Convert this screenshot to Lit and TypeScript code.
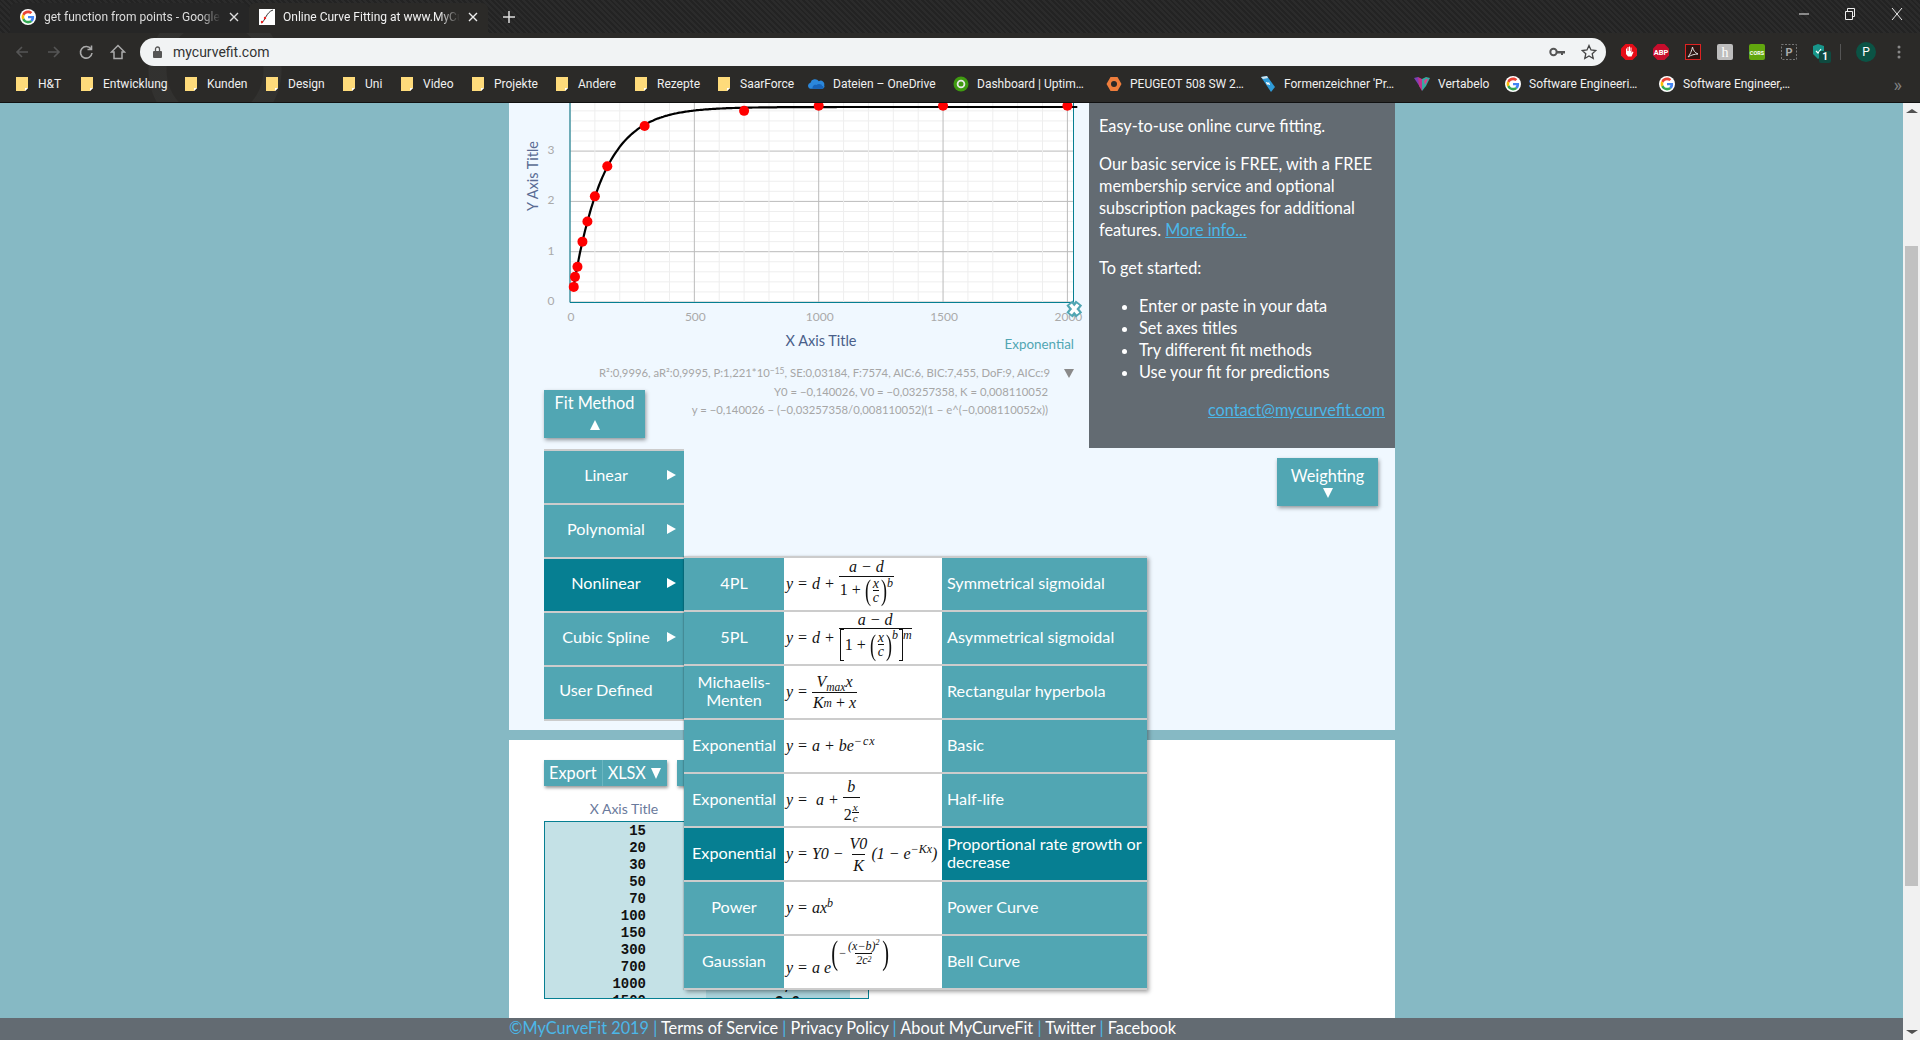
import { LitElement, css, html, svg } from 'lit';
import { customElement } from 'lit/decorators.js';

const UI_FONT = css`Lato, 'Open Sans', sans-serif`;

const X_VALUES = [15, 20, 30, 50, 70, 100, 150, 300, 700, 1000, 1500];
const POINTS: [number, number][] = [
  [15, 0.3], [20, 0.5], [30, 0.7], [50, 1.2], [70, 1.6], [100, 2.1],
  [150, 2.7], [300, 3.5], [700, 3.8], [1000, 3.9], [1500, 3.9], [2000, 3.9],
];

// chart coordinates are page pixels, the svg viewBox starts where the card does
const px = (x: number): number => 570 + x * 0.2487;
const py = (y: number): number => 302 - y * 50.3;
const fit = (x: number): number => -0.140026 + (0.03257358 / 0.008110052) * (1 - Math.exp(-0.008110052 * x));

const googleIcon = (size = 16) => html`
  <svg width=${size} height=${size} viewBox="-6 -6 60 60" class="fav">
    <circle cx="24" cy="24" r="30" fill="#fff"></circle>
    <path fill="#EA4335" d="M24 9.5c3.54 0 6.71 1.22 9.21 3.6l6.85-6.85C35.9 2.38 30.47 0 24 0 14.62 0 6.51 5.38 2.56 13.22l7.98 6.19C12.43 13.72 17.74 9.5 24 9.5z"></path>
    <path fill="#4285F4" d="M46.98 24.55c0-1.57-.15-3.09-.38-4.55H24v9.02h12.94c-.58 2.96-2.26 5.48-4.78 7.18l7.73 6c4.51-4.18 7.09-10.36 7.09-17.65z"></path>
    <path fill="#FBBC05" d="M10.53 28.59c-.48-1.45-.76-2.99-.76-4.59s.27-3.14.76-4.59l-7.98-6.19C.92 16.46 0 20.12 0 24c0 3.88.92 7.54 2.56 10.78l7.97-6.19z"></path>
    <path fill="#34A853" d="M24 48c6.48 0 11.93-2.13 16.09-5.81l-7.73-6c-2.15 1.45-4.92 2.3-8.36 2.3-6.26 0-11.57-4.22-13.47-9.91l-7.98 6.19C6.51 42.62 14.62 48 24 48z"></path>
  </svg>`;

const curveIcon = html`
  <svg width="16" height="16" viewBox="0 0 16 16" class="fav">
    <rect width="16" height="16" fill="#fff"></rect>
    <path d="M2 14C6 13 7 3 14 1" fill="none" stroke="#333" stroke-width="1"></path>
    <circle cx="3" cy="13" r="1.2" fill="#e22"></circle>
    <circle cx="6" cy="9" r="1.2" fill="#e22"></circle>
  </svg>`;

const folderIcon = html`
  <svg width="13" height="16" viewBox="0 0 13 16" class="fav folder">
    <path d="M0 1h12v11l-3 3H0z" fill="#fedb7b"></path>
    <path d="M9 15v-3h3z" fill="#fff"></path>
  </svg>`;

const oneDriveIcon = html`
  <svg width="17" height="16" viewBox="0 0 18 16" class="fav">
    <path d="M2 13a3.4 3.4 0 0 1 .6-6.4A5 5 0 0 1 11.5 5a3.8 3.8 0 0 1 5.6 4.4A2.4 2.4 0 0 1 15 13z" fill="#2b87db"></path>
    <path d="M5 13c-1-3 2-5 4-4 2-2 6-1 6 1 2 0 2 3 0 3z" fill="#1763b8"></path>
  </svg>`;

const uptimeIcon = html`
  <svg width="16" height="16" viewBox="0 0 16 16" class="fav">
    <circle cx="8" cy="8" r="7.5" fill="#3f9a10"></circle>
    <circle cx="8" cy="8" r="3.4" fill="none" stroke="#e8e8e8" stroke-width="1.8"></circle>
  </svg>`;

const peugeotIcon = html`
  <svg width="16" height="16" viewBox="0 0 16 16" class="fav">
    <path d="M4.5 1h7L15.5 8l-4 7h-7L.5 8z" fill="#ee7d3c"></path>
    <circle cx="8" cy="8" r="3" fill="#2a2928"></circle>
  </svg>`;

const formIcon = html`
  <svg width="16" height="16" viewBox="0 0 16 16" class="fav">
    <path d="M1 1l6-1 8 11-4 5z" fill="#2f9bd8"></path>
    <path d="M1 1l6-1 1 2-5 1z" fill="#cfe3ee"></path>
    <path d="M6 6h1l1 1 1-1 1 3-1 0-1-1-1 1z" fill="#fff"></path>
  </svg>`;

const vertabeloIcon = html`
  <svg width="16" height="16" viewBox="0 0 16 16" class="fav">
    <path d="M0 2l4-1 4 6-2 4z" fill="#7b3fb5"></path>
    <path d="M4 1l4 2 2 4-2 8-3-5z" fill="#c0338f"></path>
    <path d="M8 3l4-2 4 1-4 8-4 5z" fill="#38a8a0"></path>
    <path d="M10 5l2-2 2 0-3 6z" fill="#e0408a"></path>
  </svg>`;

const BOOKMARKS = [
  { label: 'H&T', icon: folderIcon, width: 65 },
  { label: 'Entwicklung', icon: folderIcon, width: 104 },
  { label: 'Kunden', icon: folderIcon, width: 81 },
  { label: 'Design', icon: folderIcon, width: 77 },
  { label: 'Uni', icon: folderIcon, width: 58 },
  { label: 'Video', icon: folderIcon, width: 71 },
  { label: 'Projekte', icon: folderIcon, width: 84 },
  { label: 'Andere', icon: folderIcon, width: 79 },
  { label: 'Rezepte', icon: folderIcon, width: 83 },
  { label: 'SaarForce', icon: folderIcon, width: 90 },
  { label: 'Dateien – OneDrive', icon: oneDriveIcon, width: 145 },
  { label: 'Dashboard | Uptim…', icon: uptimeIcon, width: 153 },
  { label: 'PEUGEOT 508 SW 2…', icon: peugeotIcon, width: 154 },
  { label: "Formenzeichner 'Pr…", icon: formIcon, width: 154 },
  { label: 'Vertabelo', icon: vertabeloIcon, width: 91 },
  { label: 'Software Engineeri…', icon: googleIcon(), width: 154 },
  { label: 'Software Engineer,…', icon: googleIcon(), width: 154 },
];

const FIT_TYPES = [
  { label: 'Linear', arrow: true },
  { label: 'Polynomial', arrow: true },
  { label: 'Nonlinear', arrow: true, active: true },
  { label: 'Cubic Spline', arrow: true },
  { label: 'User Defined', arrow: false },
];

const frac = (num: unknown, den: unknown, cls = '') =>
  html`<span class="frac ${cls}"><span class="num">${num}</span><span class="den">${den}</span></span>`;

const xOverC = html`<span class="paren">(</span>${frac('x', 'c', 'inner')}<span class="paren">)</span>`;

const NONLINEAR = [
  {
    name: '4PL',
    desc: 'Symmetrical sigmoidal',
    eq: html`<span>y = d +&nbsp;</span>${frac(
      'a − d',
      html`<span class="up">1 +&nbsp;</span>${xOverC}<span class="raise">b</span>`,
      'f4',
    )}`,
  },
  {
    name: '5PL',
    desc: 'Asymmetrical sigmoidal',
    eq: html`<span>y = d +&nbsp;</span>${frac(
      'a − d',
      html`<span class="brk l"></span><span class="up">1 +&nbsp;</span>${xOverC}<span class="raise">b</span><span class="brk r"></span><span class="raise">m</span>`,
      'f5',
    )}`,
  },
  {
    name: 'Michaelis-Menten',
    desc: 'Rectangular hyperbola',
    eq: html`<span>y =&nbsp;</span>${frac(
      html`V<sub>max</sub>x`,
      html`K<sub>m</sub><span class="up">&nbsp;+&nbsp;</span>x`,
      'mm',
    )}`,
  },
  { name: 'Exponential', desc: 'Basic', eq: html`<span>y = a + be<sup class="sp">−cx</sup></span>` },
  {
    name: 'Exponential',
    desc: 'Half-life',
    eq: html`<span>y = &nbsp;a +&nbsp;</span>${frac(
      'b',
      html`<span class="up">2</span>${frac('x', 'c', 'tiny')}`,
      'half',
    )}`,
  },
  {
    name: 'Exponential',
    desc: 'Proportional rate growth or decrease',
    active: true,
    eq: html`<span>y = Y0 −&nbsp;</span>${frac('V0', 'K', 'vk')}<span class="kx">(1 − e<sup>−Kx</sup>)</span>`,
  },
  { name: 'Power', desc: 'Power Curve', eq: html`<span>y = ax<sup class="sp">b</sup></span>` },
  {
    name: 'Gaussian',
    desc: 'Bell Curve',
    eq: html`<span class="gauss-base">y = a e</span><span class="gauss-exp"><span class="paren tall">(</span><span class="minus">−</span>${frac(
      html`(x−b)<sup class="tiny-sup">2</sup>`,
      html`2c<sup class="tiny-sup">2</sup>`,
      'small',
    )}<span class="paren tall">)</span></span>`,
  },
];

@customElement('app-root')
export class AppRoot extends LitElement {
  static styles = css`
    :host {
      display: flex;
      flex-direction: column;
      width: 1920px;
      height: 1040px;
      overflow: hidden;
      font-family: ${UI_FONT};
    }

    .fav { flex: none; display: block; }
    .fav.folder { margin-right: 1px; }

    /* browser chrome */
    .tabstrip {
      height: 33px;
      box-sizing: border-box;
      padding: 3px 0 0 10px;
      display: flex;
      align-items: flex-start;
      background:
        radial-gradient(circle at 215px 70px, transparent 48px, rgba(255, 255, 255, 0.035) 49px 66px, transparent 67px),
        repeating-linear-gradient(45deg, #2b2b2b 0 2px, #232323 2px 4px);
      color: #ddd;
      font: 12px Roboto, sans-serif;
    }
    .tab {
      width: 239px;
      height: 30px;
      display: flex;
      align-items: center;
      gap: 8px;
      padding: 0 10px 2px;
      box-sizing: border-box;
      background: #262626;
      border-radius: 6px 6px 0 0;
    }
    .tab.current { background: #2b2a28; color: #f2f2f2; }
    .tab-label {
      flex: 1;
      white-space: nowrap;
      overflow: hidden;
      mask-image: linear-gradient(to right, #000 88%, transparent);
    }
    .new-tab { margin: 8px 0 0 15px; }
    .window-controls {
      margin-left: auto;
      display: flex;
      align-items: center;
      gap: 36px;
      padding: 5px 17px 0 0;
    }

    .toolbar {
      height: 33px;
      display: flex;
      align-items: center;
      background:
        radial-gradient(circle at 215px 37px, transparent 48px, rgba(255, 255, 255, 0.035) 49px 66px, transparent 67px),
        #2b2a28;
    }
    .nav { display: flex; gap: 16px; padding: 0 0 0 14px; width: 140px; box-sizing: border-box; margin-top: 4px; }
    .omnibox {
      width: 1466px;
      height: 28px;
      margin-top: 4px;
      display: flex;
      align-items: center;
      gap: 11px;
      padding: 0 9px 0 13px;
      box-sizing: border-box;
      background: #f1f3f4;
      border-radius: 14px;
      color: #333;
      font: 14px Roboto, sans-serif;
    }
    .omni-url { flex: 1; }
    .star { margin-left: 5px; }
    .extensions {
      display: flex;
      align-items: center;
      gap: 14px;
      margin: 4px 0 0 14px;
    }
    .ext { width: 18px; height: 18px; flex: none; }
    .divider { width: 1px; height: 16px; background: #555; margin-left: -4px; }
    .shield { position: relative; }
    .badge {
      position: absolute;
      left: 7px;
      top: 8px;
      width: 12px;
      height: 12px;
      background: #0f4a40;
      color: #fff;
      font: bold 10px/12px Roboto, sans-serif;
      text-align: center;
      border-radius: 2px;
    }
    .avatar {
      width: 20px;
      height: 20px;
      margin-left: 1px;
      border-radius: 50%;
      background: #0b5345;
      color: #fff;
      font: 12px/20px Roboto, sans-serif;
      text-align: center;
    }
    .dots { margin-left: 7px; }

    .bookmarks {
      height: 36px;
      display: flex;
      align-items: center;
      padding-left: 16px;
      background:
        radial-gradient(circle at 215px 4px, transparent 48px, rgba(255, 255, 255, 0.035) 49px 66px, transparent 67px),
        #2b2a28;
      border-bottom: 1px solid #111;
      color: #f0f0f0;
      font: 12px Roboto, sans-serif;
      position: relative;
    }
    .bookmark { display: flex; align-items: center; gap: 8px; white-space: nowrap; flex: none; }
    .chevrons { position: absolute; right: 18px; color: #808080; font-size: 18px; }

    /* page */
    .window { flex: 1; min-height: 0; display: flex; }
    .viewport { flex: 1; min-width: 0; display: flex; flex-direction: column; background: #86b9c4; }
    .content { flex: 1; min-height: 0; display: flex; flex-direction: column; gap: 10px; margin-left: 509px; width: 886px; }
    .footer {
      height: 22px;
      padding-left: 509px;
      background: #636b72;
      color: #fff;
      font-size: 16.3px;
      line-height: 20px;
      white-space: nowrap;
    }
    .footer a, .footer i { color: #4bb7e8; font-style: normal; }
    .footer a.plain { color: #fff; }

    .scrollbar {
      width: 17px;
      display: flex;
      flex-direction: column;
      align-items: center;
      background: #f1f1f1;
      padding: 6px 0;
      box-sizing: border-box;
    }
    .sb-up { border: 4px solid transparent; border-top: 0; border-bottom: 4px solid #505050; border-left-width: 6px; border-right-width: 6px; }
    .sb-down { border: 4px solid transparent; border-bottom: 0; border-top: 4px solid #505050; border-left-width: 6px; border-right-width: 6px; margin-top: auto; }
    .sb-thumb { width: 13px; height: 640px; margin-top: 133px; background: #c1c1c1; }

    .card-top {
      height: 627px;
      position: relative;
      z-index: 2;
      display: grid;
      grid-template-columns: 580px 306px;
      background: #f0f8ff;
    }
    .chart-col { display: flex; flex-direction: column; }
    .chart { display: block; width: 580px; height: 258px; font-family: ${UI_FONT}; }

    .fit-row { display: grid; padding-left: 35px; margin-top: 3px; height: 74px; }
    .fit-row > * { grid-area: 1 / 1; }
    .stats {
      justify-self: end;
      align-self: start;
      color: #a6a6a6;
      font-size: 11.3px;
      line-height: 18.5px;
      text-align: right;
      white-space: nowrap;
      padding-right: 41px;
    }
    .stats sup { font-size: 8.5px; line-height: 0; vertical-align: 3px; }
    .stats-first { margin-right: -26px; display: flex; align-items: center; justify-content: flex-end; }
    .stats-arrow {
      margin-left: 14px;
      border-left: 5px solid transparent;
      border-right: 5px solid transparent;
      border-top: 9px solid #8a8a8a;
    }

    .btn {
      width: 101px;
      height: 48px;
      box-sizing: border-box;
      display: flex;
      flex-direction: column;
      align-items: center;
      background: #51a6b3;
      color: #fff;
      font-size: 16.3px;
      line-height: 20px;
      box-shadow: 1px 2px 4px rgba(0, 0, 0, 0.4);
    }
    .btn-fit { justify-self: start; align-self: end; padding-top: 3px; }
    .tri-up { border-left: 5px solid transparent; border-right: 5px solid transparent; border-bottom: 10px solid #fff; margin-top: 7px; }
    .tri-down { border-left: 5px solid transparent; border-right: 5px solid transparent; border-top: 10px solid #fff; margin-top: 2px; }

    .side-col { display: flex; flex-direction: column; }
    .sidebar {
      height: 345px;
      padding: 12px 10px 0 10px;
      box-sizing: border-box;
      background: #636b72;
      color: #fff;
      font-size: 16.3px;
      line-height: 22px;
    }
    .sidebar p { margin: 0 0 16px; }
    .sidebar ul { margin: 0 0 16px; padding-left: 40px; }
    .sidebar a { color: #4bb7e8; text-decoration: underline; }
    .contact { text-align: right; }
    .btn-weight { margin: 10px 0 0 188px; padding-top: 8px; }

    /* fit method menu, lies over both cards */
    .menu { position: absolute; left: 35px; top: 346px; width: 140px; font-size: 16.2px; color: #fff; }
    .menu-row {
      height: 54px;
      box-sizing: border-box;
      display: flex;
      align-items: center;
      padding-bottom: 5px;
      background: #51a6b3;
      border-top: 2px solid #ccc;
    }
    .menu-row.last { height: 56px; padding-bottom: 7px; border-bottom: 2px solid #ccc; }
    .menu-row.active { background: #067f92; }
    .menu-row .menu-label { width: 124px; text-align: center; }
    .menu-arrow { border-top: 5px solid transparent; border-bottom: 5px solid transparent; border-left: 9px solid #fff; margin-left: -1px; }
    .submenu {
      position: absolute;
      left: 140px;
      top: 107px;
      width: 463px;
      border-bottom: 2px solid #ccc;
      box-shadow: 2px 2px 4px rgba(0, 0, 0, 0.35), -1px 0 1px rgba(0, 0, 0, 0.12);
    }
    .sub-row { height: 54px; box-sizing: border-box; display: grid; grid-template-columns: 100px 158px 205px; border-top: 2px solid #ccc; }
    .sub-name, .sub-desc { background: #51a6b3; display: flex; align-items: center; line-height: 18px; padding-bottom: 3px; }
    .sub-name { justify-content: center; text-align: center; padding-left: 3px; padding-right: 3px; }
    .sub-desc { padding-left: 5px; padding-right: 3px; }
    .sub-row.active .sub-name, .sub-row.active .sub-desc { background: #067f92; }

    /* formulas */
    .eq {
      background: #fff;
      color: #111;
      font: italic 16px 'Liberation Serif', serif;
      display: flex;
      align-items: center;
      padding-left: 2px;
      white-space: nowrap;
      overflow: hidden;
    }
    .frac { display: inline-flex; flex-direction: column; align-items: center; }
    .frac > .num { padding: 0 2px; line-height: 16px; }
    .frac > .den { display: flex; align-items: center; justify-content: center; border-top: 1px solid #111; line-height: 16px; padding: 0 1px; }
    .up { font-style: normal; }
    .paren { font-style: normal; font-size: 30px; line-height: 24px; font-weight: normal; transform: scaleX(0.6); margin: 0 -2px; }
    .inner > .num, .inner > .den { font-size: 14px; line-height: 13px; }
    .inner > .den { padding: 0; }
    .eq sub { font-size: 11.5px; line-height: 0; }
    .eq sup { font-size: 12px; line-height: 0; }
    .raise { align-self: flex-start; font-size: 12px; line-height: 12px; }
    .sp { letter-spacing: 1px; }
    .kx { margin-left: 2px; }
    .f4 { margin-bottom: 7px; }
    .f4 > .num { line-height: 18px; }
    .f5 { margin-bottom: 4px; }
    .f5 > .den { padding-right: 0; }
    .brk { width: 3px; height: 30px; border: solid #111; border-width: 1px 0; flex: none; }
    .brk.l { border-left-width: 1px; margin-right: 1px; }
    .brk.r { border-right-width: 1px; margin-left: 1px; }
    .mm > .num, .mm > .den { line-height: 20px; }
    .half > .num { line-height: 20px; }
    .half > .den { height: 25px; align-items: flex-end; }
    .tiny > .num, .tiny > .den { font-size: 11px; line-height: 10px; padding: 0 1px; }
    .vk > .num, .vk > .den { line-height: 21px; }
    .gauss-base { align-self: flex-end; margin-bottom: 11px; }
    .gauss-exp { display: flex; align-items: center; align-self: flex-start; margin-top: 3px; font-size: 12px; }
    .paren.tall { font-size: 34px; line-height: 28px; }
    .minus { font-style: normal; margin-left: 1px; }
    .small > .num, .small > .den { font-size: 12px; line-height: 13px; }
    .eq sup.tiny-sup { font-size: 8px; }

    /* data table card */
    .card-bottom { flex: 1; min-height: 0; padding: 20px 0 0 35px; background: #fff; overflow: hidden; }
    .actions { display: flex; gap: 10px; height: 26px; }
    .split { display: flex; background: #51a6b3; color: #fff; font-size: 16.3px; line-height: 26px; box-shadow: 1px 2px 3px rgba(0, 0, 0, 0.4); }
    .split span { padding: 0 5px; }
    .split span + span { border-left: 1px solid #6bb6c1; display: flex; align-items: center; gap: 5px; padding-right: 6px; }
    .split span.split-tri { padding: 0; border-left: 5px solid transparent; border-right: 5px solid transparent; border-top: 11px solid #fff; }
    .split-hidden { width: 80px; }
    .col-title { margin: 13px 0 3px; width: 160px; text-align: center; color: #6a7a9c; font-size: 14px; line-height: 19px; }
    .sheet {
      width: 325px;
      height: 178px;
      box-sizing: border-box;
      border: 1px solid #067f92;
      display: grid;
      grid-template-columns: 161px 144px 18px;
      overflow: hidden;
      font: bold 14px/17px 'Liberation Mono', monospace;
      color: #111;
    }
    .sheet-col { padding-top: 1px; }
    .sheet-x { background: #c4e1e6; text-align: right; padding-right: 60px; box-sizing: border-box; }
    .sheet-y { background: #a8d2da; padding: 155px 0 0 69px; box-sizing: border-box; }
    .sheet-bar { background: #e6eaea; }
  `;

  private renderChart() {
    const verticals: number[] = [];
    for (let x = 0; x <= 2000; x += 100) verticals.push(x);
    const horizontals: number[] = [];
    for (let y = 0; y <= 4; y += 0.2) horizontals.push(Math.round(y * 10) / 10);

    let curve = '';
    for (let x = 15; x <= 2040; x += 5) {
      curve += `${curve ? 'L' : 'M'}${px(x).toFixed(1)} ${py(fit(x)).toFixed(1)}`;
    }

    return html`
      <svg class="chart" viewBox="509 103 580 258">
        <rect x="570" y="103" width="503.5" height="199" fill="#fff"></rect>
        ${horizontals.map((y) => {
          const major = Number.isInteger(y);
          return svg`<line x1="570" x2="1073" y1=${py(y)} y2=${py(y)} stroke=${major ? '#bbb' : '#eee'}></line>`;
        })}
        ${verticals.map((x) => {
          const major = x % 500 === 0;
          return svg`<line x1=${px(x)} x2=${px(x)} y1="103" y2="302" stroke=${major ? '#bbb' : '#eee'}></line>`;
        })}
        <path d="M570 103V302.5H1073.5V103" fill="none" stroke="#067f92" stroke-width="1"></path>
        ${[0, 1, 2, 3].map(
          (y) => svg`<text x="551" y=${py(y) + 3} text-anchor="middle" font-size="12" fill="#aaa">${y}</text>`,
        )}
        ${[0, 500, 1000, 1500, 2000].map(
          (x) => svg`<text x=${px(x) + 1} y="321" text-anchor="middle" font-size="12" fill="#aaa">${x}</text>`,
        )}
        <text x="821" y="346" text-anchor="middle" font-size="14.5" fill="#4a5f8a">X Axis Title</text>
        <text transform="translate(538 176) rotate(-90)" text-anchor="middle" font-size="14.5" fill="#5a6c94">Y Axis Title</text>
        <text x="1074" y="349" text-anchor="end" font-size="13.4" fill="#51a6b3">Exponential</text>
        <path d=${curve} fill="none" stroke="#000" stroke-width="2.2"></path>
        ${POINTS.map(([x, y]) => svg`<circle cx=${px(x)} cy=${py(y)} r="5" fill="#f00"></circle>`)}
        <path d="M1069.5 303L1079 315M1079 303L1069.500 315" fill="none" stroke="#51a6b3" stroke-width="8"></path>
        <path d="M1070.500 304.500L1078 313.500M1078 304.500L1070.500 313.500" fill="none" stroke="#fff" stroke-width="3.500"></path>
      </svg>
    `;
  }

  private renderMenu() {
    return html`
      <div class="menu">
        ${FIT_TYPES.map(
          (item, i) => html`
            <div class="menu-row ${item.active ? 'active' : ''} ${i === FIT_TYPES.length - 1 ? 'last' : ''}">
              <span class="menu-label">${item.label}</span>
              ${item.arrow ? html`<span class="menu-arrow"></span>` : null}
            </div>
          `,
        )}
        <div class="submenu">
          ${NONLINEAR.map(
            (row) => html`
              <div class="sub-row ${row.active ? 'active' : ''}">
                <div class="sub-name">${row.name}</div>
                <div class="eq">${row.eq}</div>
                <div class="sub-desc">${row.desc}</div>
              </div>
            `,
          )}
        </div>
      </div>
    `;
  }

  private renderBrowser() {
    return html`
      <div class="tabstrip">
        <div class="tab">
          ${googleIcon()}
          <span class="tab-label">get function from points - Google Search</span>
          <svg width="10" height="10" viewBox="0 0 10 10"><path d="M1 1l8 8M9 1l-8 8" stroke="#ddd" stroke-width="1.4"></path></svg>
        </div>
        <div class="tab current">
          ${curveIcon}
          <span class="tab-label">Online Curve Fitting at www.MyCurveFit.com</span>
          <svg width="10" height="10" viewBox="0 0 10 10"><path d="M1 1l8 8M9 1l-8 8" stroke="#eee" stroke-width="1.4"></path></svg>
        </div>
        <svg class="new-tab" width="12" height="12" viewBox="0 0 12 12"><path d="M6 0v12M0 6h12" stroke="#ddd" stroke-width="1.5"></path></svg>
        <div class="window-controls">
          <svg width="10" height="10" viewBox="0 0 10 10"><path d="M0 5h10" stroke="#eee"></path></svg>
          <svg width="10" height="12" viewBox="0 0 10 12"><path d="M.5 3.5h7v8h-7zM2.5 3V.5h7v8H8" fill="none" stroke="#eee"></path></svg>
          <svg width="12" height="12" viewBox="0 0 12 12"><path d="M1 0l10 12M11 0L1 12" stroke="#eee"></path></svg>
        </div>
      </div>
      <div class="toolbar">
        <div class="nav">
          <svg width="16" height="16" viewBox="0 0 16 16"><path d="M14 8H3M8 3L3 8l5 5" fill="none" stroke="#555" stroke-width="1.6"></path></svg>
          <svg width="16" height="16" viewBox="0 0 16 16"><path d="M2 8h11M8 3l5 5-5 5" fill="none" stroke="#555" stroke-width="1.6"></path></svg>
          <svg width="16" height="16" viewBox="0 0 16 16"><path d="M13 5A5.8 5.8 0 1 0 14 9M13.500 1.500V5.500H9.500" fill="none" stroke="#aaa" stroke-width="1.6"></path></svg>
          <svg width="16" height="16" viewBox="0 0 16 16"><path d="M8 1.500L1.500 8H4v6.500h8V8h2.500z" fill="none" stroke="#aaa" stroke-width="1.5"></path></svg>
        </div>
        <div class="omnibox">
          <svg width="9" height="12" viewBox="0 0 9 12"><path d="M2.500 5V3a2 2 0 0 1 4 0v2" fill="none" stroke="#555" stroke-width="1.300"></path><rect y="5" width="9" height="7" rx="1" fill="#555"></rect></svg>
          <span class="omni-url">mycurvefit.com</span>
          <svg width="16" height="10" viewBox="0 0 16 10"><circle cx="4.500" cy="5" r="3.200" fill="none" stroke="#555" stroke-width="2"></circle><path d="M8 4h8v2.500h-2V8h-2V6.500H8z" fill="#555"></path></svg>
          <svg class="star" width="16" height="16" viewBox="0 0 16 16"><path d="M8 1.500l2 4.500 4.800.5-3.600 3.200 1 4.800L8 12l-4.200 2.500 1-4.800L1.200 6.500 6 6z" fill="none" stroke="#444" stroke-width="1.300"></path></svg>
        </div>
        <div class="extensions">
          <svg class="ext" viewBox="0 0 18 18"><path d="M5.500 1h7L17 5.500v7L12.500 17h-7L1 12.500v-7z" fill="#e60c17"></path><path d="M6 9V5.500h1V8h.5V4h1v4H9V3.500h1V8h.5V4.500h1V10l1-1.500 1 .5-2 4.500H8L6 11z" fill="#fff"></path></svg>
          <svg class="ext" viewBox="0 0 18 18"><path d="M5.500 1h7L17 5.500v7L12.500 17h-7L1 12.500v-7z" fill="#c70d2c"></path><text x="9" y="12" text-anchor="middle" font-family="Roboto" font-weight="700" font-size="7.500" fill="#fff">ABP</text></svg>
          <svg class="ext" viewBox="0 0 18 18"><rect x=".5" y=".5" width="15" height="15" transform="translate(1 1)" fill="#2d1512" stroke="#d22"></rect><path d="M4 14c2-2 4-7 4.500-10C9 7 11 10 14 11c-3 0-7 1-10 3z" fill="none" stroke="#ddd"></path></svg>
          <svg class="ext" viewBox="0 0 18 18"><rect x="1" y="1" width="16" height="16" rx="2" fill="#bdbdbd"></rect><text x="9" y="14" text-anchor="middle" font-family="Liberation Serif" font-size="14" fill="#fff">h</text></svg>
          <svg class="ext" viewBox="0 0 18 18"><rect x="1" y="1" width="16" height="16" rx="2" fill="#61a60e"></rect><text x="9" y="11.500" text-anchor="middle" font-family="Roboto" font-weight="700" font-size="5.500" fill="#fff">CORS</text></svg>
          <svg class="ext" viewBox="0 0 18 18"><rect x="1.500" y="1.500" width="15" height="15" fill="none" stroke="#777" stroke-dasharray="2 1.500"></rect><text x="9" y="13" text-anchor="middle" font-family="Roboto" font-weight="700" font-size="11" fill="#aaa">P</text></svg>
          <div class="ext shield">
            <svg width="16" height="18" viewBox="0 0 16 18"><path d="M6 1l6 2v8l-6 5-5-5V3z" fill="#17958a"></path><path d="M4 8l2 2 3-4" fill="none" stroke="#fff" stroke-width="1.200"></path></svg>
            <span class="badge">1</span>
          </div>
          <span class="divider"></span>
          <span class="avatar">P</span>
          <svg class="dots" width="4" height="14" viewBox="0 0 4 14"><circle cx="2" cy="2" r="1.500" fill="#888"></circle><circle cx="2" cy="7" r="1.500" fill="#888"></circle><circle cx="2" cy="12" r="1.500" fill="#888"></circle></svg>
        </div>
      </div>
      <div class="bookmarks">
        ${BOOKMARKS.map(
          (b) => html`<div class="bookmark" style="width:${b.width}px">${b.icon}<span>${b.label}</span></div>`,
        )}
        <span class="chevrons">»</span>
      </div>
    `;
  }

  render() {
    return html`
      ${this.renderBrowser()}
      <div class="window">
        <div class="viewport">
          <div class="content">
            <section class="card-top">
              <div class="chart-col">
                ${this.renderChart()}
                <div class="fit-row">
                  <div class="stats">
                    <div class="stats-first">
                      <span>R²:0,9996, aR²:0,9995, P:1,221*10<sup>−15</sup>, SE:0,03184, F:7574, AIC:6, BIC:7,455, DoF:9, AICc:9</span>
                      <span class="stats-arrow"></span>
                    </div>
                    <div>Y0 = −0,140026, V0 = −0,03257358, K = 0,008110052</div>
                    <div>y = −0,140026 − (−0,03257358/0,008110052)(1 − e^(−0,008110052x))</div>
                  </div>
                  <div class="btn btn-fit">Fit Method<span class="tri-up"></span></div>
                </div>
              </div>
              <div class="side-col">
                <aside class="sidebar">
                  <p>Easy-to-use online curve fitting.</p>
                  <p>Our basic service is FREE, with a FREE membership service and optional subscription packages for additional features. <a>More info...</a></p>
                  <p>To get started:</p>
                  <ul>
                    <li>Enter or paste in your data</li>
                    <li>Set axes titles</li>
                    <li>Try different fit methods</li>
                    <li>Use your fit for predictions</li>
                  </ul>
                  <div class="contact"><a>contact@mycurvefit.com</a></div>
                </aside>
                <div class="btn btn-weight">Weighting<span class="tri-down"></span></div>
              </div>
              ${this.renderMenu()}
            </section>
            <section class="card-bottom">
              <div class="actions">
                <div class="split"><span>Export</span><span>XLSX<span class="split-tri"></span></span></div>
                <div class="split split-hidden"></div>
              </div>
              <div class="col-title">X Axis Title</div>
              <div class="sheet">
                <div class="sheet-col sheet-x">${X_VALUES.map((x) => html`<div>${x}</div>`)}</div>
                <div class="sheet-col sheet-y"><div>3,9</div><div>3,9</div></div>
                <div class="sheet-bar"></div>
              </div>
            </section>
          </div>
          <footer class="footer"><a>©MyCurveFit 2019</a> <i>|</i> <a class="plain">Terms of Service</a> <i>|</i> <a class="plain">Privacy Policy</a> <i>|</i> <a class="plain">About MyCurveFit</a> <i>|</i> <a class="plain">Twitter</a> <i>|</i> <a class="plain">Facebook</a></footer>
        </div>
        <div class="scrollbar">
          <span class="sb-up"></span>
          <span class="sb-thumb"></span>
          <span class="sb-down"></span>
        </div>
      </div>
    `;
  }
}
